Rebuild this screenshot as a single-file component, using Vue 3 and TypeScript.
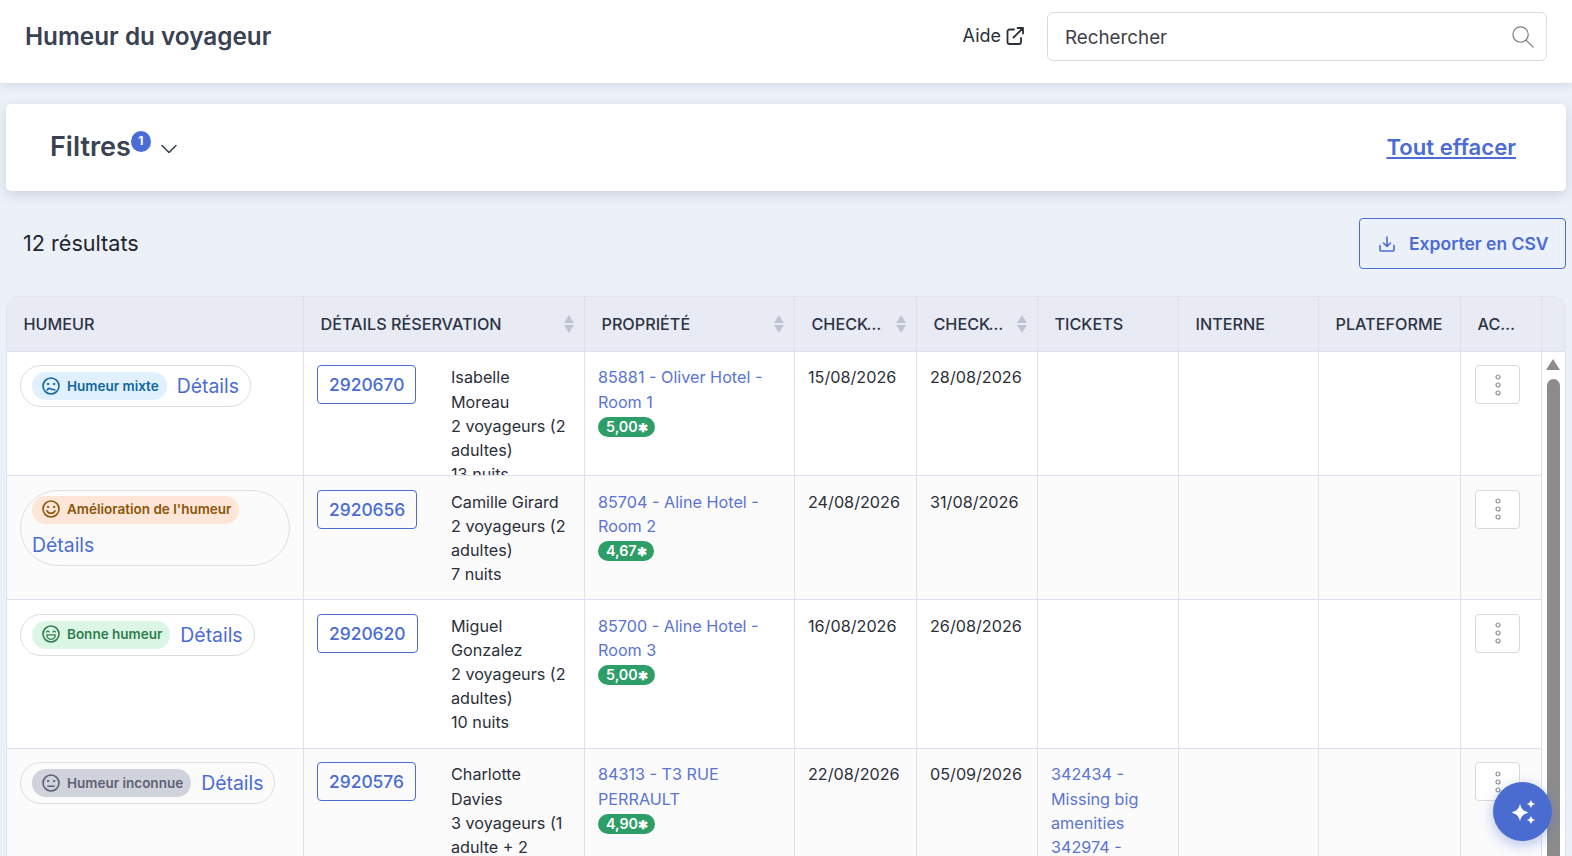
<template>
  <div class="page">
    <header class="topbar">
      <h1 class="title">Humeur du voyageur</h1>
      <div class="topbar-right">
        <a class="help">
          Aide
          <svg class="help-icon" viewBox="0 0 20 20" fill="none" stroke="currentColor" stroke-width="1.8" stroke-linecap="round" stroke-linejoin="round">
            <path d="M9 3.5H4.5a2 2 0 0 0-2 2V16a2 2 0 0 0 2 2H14a2 2 0 0 0 2-2v-4" />
            <path d="M8.5 11.5 18 2M12.5 2H18v5.5" />
          </svg>
        </a>
        <div class="search">
          <input class="search-input" placeholder="Rechercher" />
          <svg class="search-icon" viewBox="0 0 24 24" fill="none" stroke="currentColor" stroke-width="1.3" stroke-linecap="round">
            <circle cx="10" cy="10" r="8" />
            <path d="m16 16 7 7" />
          </svg>
        </div>
      </div>
    </header>

    <main class="content">
      <section class="filters">
        <div class="filters-left">
          <span class="filters-label">Filtres</span>
          <span class="filters-badge">1</span>
          <svg class="chevron" viewBox="0 0 16 10" fill="none" stroke="currentColor" stroke-width="1.6" stroke-linecap="round" stroke-linejoin="round">
            <path d="m1 1.500 7 7 7-7" />
          </svg>
        </div>
        <a class="clear-all">Tout effacer</a>
      </section>

      <div class="results-bar">
        <span class="results-count">12 résultats</span>
        <button class="export-btn">
          <svg class="export-icon" viewBox="0 0 18 18" fill="none" stroke="currentColor" stroke-width="1.6" stroke-linecap="round" stroke-linejoin="round">
            <path d="M9 2v9.5M5.5 8 9 11.5 12.5 8" />
            <path d="M2 10.5V15a1 1 0 0 0 1 1h12a1 1 0 0 0 1-1v-4.5" />
          </svg>
          Exporter en CSV
        </button>
      </div>

      <section class="table">
        <div class="table-head">
          <div v-for="col in columns" :key="col.label" class="th">
            <span class="th-label">{{ col.label }}</span>
            <span v-if="col.sortable" class="sort">
              <i class="sort-up"></i>
              <i class="sort-down"></i>
            </span>
          </div>
          <div class="th th-scroll"></div>
        </div>

        <div class="table-body">
          <div class="rows">
            <div
              v-for="(row, i) in rows"
              :key="row.id"
              class="row"
              :class="{ alt: i % 2 === 1 }"
              :style="{ height: row.height + 'px' }"
            >
              <div class="td">
                <div class="mood-pill">
                  <span class="chip" :class="'chip-' + row.mood">
                    <svg class="face" viewBox="0 0 18 18" fill="none" stroke="currentColor" stroke-width="1.6" stroke-linecap="round" stroke-linejoin="round">
                      <circle cx="9" cy="9" r="8" />
                      <template v-if="row.mood === 'mixed'">
                        <circle cx="6" cy="7" r="0.7" fill="currentColor" stroke-width="1" />
                        <circle cx="12" cy="7" r="0.7" fill="currentColor" stroke-width="1" />
                        <path d="M5.200 13c.8-1.500 2-2 3.200-1.400s1.200 1 2.300 .9 1.500-.3 2.100 .5" />
                      </template>
                      <template v-else-if="row.mood === 'better'">
                        <circle cx="6" cy="7" r="0.7" fill="currentColor" stroke-width="1" />
                        <circle cx="12" cy="7" r="0.7" fill="currentColor" stroke-width="1" />
                        <path d="M5 10.800c.8 1.700 2.200 2.500 4 2.500s3.200-.8 4-2.500" />
                      </template>
                      <template v-else-if="row.mood === 'good'">
                        <path d="M4.600 7c.5-1.100 2-1.100 2.500 0M10.900 7c.5-1.100 2-1.100 2.500 0" stroke-width="1.300" />
                        <path d="M4.800 9.800h8.400c0 2.800-1.800 4.500-4.200 4.500s-4.200-1.700-4.200-4.500Z" stroke-width="1.300" />
                      </template>
                      <template v-else>
                        <circle cx="6" cy="7" r="0.7" fill="currentColor" stroke-width="1" />
                        <circle cx="12" cy="7" r="0.7" fill="currentColor" stroke-width="1" />
                        <path d="M6 12.200h6" />
                      </template>
                    </svg>
                    {{ row.moodLabel }}
                  </span>
                  <a class="mood-link">Détails</a>
                </div>
              </div>

              <div class="td booking">
                <div><button class="booking-id">{{ row.id }}</button></div>
                <div class="booking-text">
                  <div>{{ row.guest }}</div>
                  <div>{{ row.travellers }}</div>
                  <div>{{ row.nights }}</div>
                </div>
              </div>

              <div class="td">
                <a class="link">{{ row.property }}</a>
                <div><span class="score">{{ row.score }}<span class="score-star">✱</span></span></div>
              </div>

              <div class="td">{{ row.checkIn }}</div>
              <div class="td">{{ row.checkOut }}</div>
              <div class="td">
                <a v-for="t in row.tickets" :key="t" class="link ticket">{{ t }}</a>
              </div>
              <div class="td"></div>
              <div class="td"></div>
              <div class="td">
                <button class="action-btn">
                  <svg viewBox="0 0 8 24" width="8" height="24" fill="none" stroke="currentColor" stroke-width="1.200">
                    <circle cx="4" cy="4" r="2" />
                    <circle cx="4" cy="12" r="2" />
                    <circle cx="4" cy="20" r="2" />
                  </svg>
                </button>
              </div>
            </div>
          </div>

          <div class="scrollbar">
            <i class="scroll-arrow"></i>
            <div class="scroll-thumb"></div>
          </div>
        </div>
      </section>
    </main>

    <button class="fab">
      <svg viewBox="0 0 32 32" width="32" height="32" fill="#fff">
        <path d="M13 7.500c.9 5 3 7.300 8.500 9-5.500 1.700-7.600 4-8.500 9-.9-5-3-7.300-8.500-9 5.500-1.700 7.600-4 8.500-9Z" />
        <path d="M24 3.500c.5 2.600 1.600 3.900 4.500 4.500-2.900.6-4 1.900-4.500 4.500-.5-2.600-1.600-3.900-4.500-4.500 2.900-.6 4-1.900 4.500-4.500Z" />
        <path d="M24 19.500c.5 2.600 1.600 3.900 4.500 4.500-2.900.6-4 1.900-4.500 4.500-.5-2.600-1.600-3.900-4.500-4.500 2.900-.6 4-1.900 4.500-4.500Z" />
      </svg>
    </button>
  </div>
</template>

<script setup lang="ts">
interface Column {
  label: string
  sortable?: boolean
}

interface Row {
  id: string
  height: number
  mood: 'mixed' | 'better' | 'good' | 'unknown'
  moodLabel: string
  guest: string
  travellers: string
  nights: string
  property: string
  score: string
  checkIn: string
  checkOut: string
  tickets: string[]
}

const columns: Column[] = [
  { label: 'Humeur' },
  { label: 'Détails réservation', sortable: true },
  { label: 'Propriété', sortable: true },
  { label: 'Check-in', sortable: true },
  { label: 'Check-out', sortable: true },
  { label: 'Tickets' },
  { label: 'Interne' },
  { label: 'Plateforme' },
  { label: 'Actions' }
]

const rows: Row[] = [
  {
    id: '2920670',
    height: 124.2,
    mood: 'mixed',
    moodLabel: 'Humeur mixte',
    guest: 'Isabelle Moreau',
    travellers: '2 voyageurs (2 adultes)',
    nights: '13 nuits',
    property: '85881 - Oliver Hotel - Room 1',
    score: '5,00',
    checkIn: '15/08/2026',
    checkOut: '28/08/2026',
    tickets: []
  },
  {
    id: '2920656',
    height: 124,
    mood: 'better',
    moodLabel: "Amélioration de l'humeur",
    guest: 'Camille Girard',
    travellers: '2 voyageurs (2 adultes)',
    nights: '7 nuits',
    property: '85704 - Aline Hotel - Room 2',
    score: '4,67',
    checkIn: '24/08/2026',
    checkOut: '31/08/2026',
    tickets: []
  },
  {
    id: '2920620',
    height: 148.8,
    mood: 'good',
    moodLabel: 'Bonne humeur',
    guest: 'Miguel Gonzalez',
    travellers: '2 voyageurs (2 adultes)',
    nights: '10 nuits',
    property: '85700 - Aline Hotel - Room 3',
    score: '5,00',
    checkIn: '16/08/2026',
    checkOut: '26/08/2026',
    tickets: []
  },
  {
    id: '2920576',
    height: 220,
    mood: 'unknown',
    moodLabel: 'Humeur inconnue',
    guest: 'Charlotte Davies',
    travellers: '3 voyageurs (1 adulte + 2 enfants)',
    nights: '14 nuits',
    property: '84313 - T3 RUE PERRAULT',
    score: '4,90',
    checkIn: '22/08/2026',
    checkOut: '05/09/2026',
    tickets: ['342434 - Missing big amenities', '342974 - Cleaning issue']
  }
]
</script>

<style>
html,
body {
  margin: 0;
  background: #ecf0f8;
}
</style>

<style scoped>
.page {
  position: relative;
  height: 856px;
  overflow: hidden;
  background: #ecf0f8;
  font-family: Inter, "Liberation Sans", sans-serif;
  font-size: 16.2px;
  line-height: 24.2px;
  color: #2b2f3a;
}

.topbar {
  position: relative;
  z-index: 2;
  display: flex;
  align-items: center;
  justify-content: space-between;
  height: 83px;
  box-sizing: border-box;
  padding: 0 25px 11px;
  background: #fff;
  box-shadow: 0 2px 8px rgba(60, 70, 110, 0.14);
}

.title {
  margin: 0;
  font-size: 24.3px;
  font-weight: 600;
  color: #3a4152;
}

.topbar-right {
  display: flex;
  align-items: center;
  gap: 22px;
}

.help {
  display: flex;
  align-items: center;
  gap: 4px;
  font-size: 18px;
  color: #2b2f3a;
}

.help-icon {
  width: 20px;
  height: 20px;
}

.search {
  position: relative;
  width: 500px;
}

.search-input {
  display: block;
  width: 100%;
  height: 49px;
  box-sizing: border-box;
  padding: 2px 50px 0 17px;
  border: 1px solid #dcdcdc;
  border-radius: 6px;
  outline: none;
  font-family: inherit;
  font-size: 18.8px;
  color: #2b2f3a;
}

.search-input::placeholder {
  color: #3f4148;
  opacity: 1;
}

.search-icon {
  position: absolute;
  top: 13px;
  right: 13px;
  width: 23px;
  height: 23px;
  color: #808080;
}

.content {
  padding: 21px 6px 0;
}

.filters {
  display: flex;
  align-items: center;
  justify-content: space-between;
  height: 87px;
  padding: 0 50px 0 44px;
  background: #fff;
  border-radius: 5px;
  box-shadow: 0 4px 12px rgba(60, 70, 110, 0.16);
}

.filters-left {
  display: flex;
  align-items: center;
  margin-top: -2px;
  color: #3a4152;
}

.filters-label {
  font-size: 27px;
  line-height: 36px;
  font-weight: 600;
}

.filters-badge {
  display: flex;
  align-items: center;
  justify-content: center;
  align-self: flex-start;
  width: 20px;
  height: 21px;
  margin-top: 2px;
  border-radius: 50%;
  background: #4a6cd4;
  color: #fff;
  font-size: 12px;
  line-height: 1;
  font-weight: 700;
}

.chevron {
  width: 16px;
  height: 10px;
  margin: 4px 0 0 10px;
}

.clear-all {
  font-size: 22.1px;
  font-weight: 600;
  color: #4a6cd4;
  text-decoration: underline;
}

.results-bar {
  display: flex;
  align-items: center;
  justify-content: space-between;
  height: 105px;
  padding-left: 17px;
  box-sizing: border-box;
}

.results-count {
  font-size: 21.6px;
  color: #22252d;
}

.export-btn {
  display: flex;
  align-items: center;
  gap: 13px;
  width: 207px;
  height: 51px;
  box-sizing: border-box;
  padding: 0 0 0 18px;
  background: transparent;
  border: 1px solid #4a6cd4;
  border-radius: 4px;
  font-family: inherit;
  font-size: 17.5px;
  font-weight: 600;
  color: #4a6cd4;
}

.export-icon {
  width: 18px;
  height: 18px;
}

.table {
  border: 1px solid #dfe3ee;
  border-radius: 12px 12px 0 0;
  overflow: hidden;
  background: #fff;
}

.table-head,
.row {
  display: grid;
  grid-template-columns: 297px 281px 210px 122px 121px 141px 140px 142px 81px;
}

.table-head {
  grid-template-columns: 297px 281px 210px 122px 121px 141px 140px 142px 81px 1fr;
  height: 54px;
  background: #e8ebf3;
  border-bottom: 1px solid #dde1ee;
}

.th {
  display: flex;
  align-items: center;
  justify-content: space-between;
  gap: 10px;
  min-width: 0;
  padding: 0 10px 0 16.5px;
  border-right: 1px solid #dde1ee;
  font-weight: 500;
  text-transform: uppercase;
  color: #2d3345;
}

.th:nth-child(9) {
  padding-right: 22px;
}

.th-scroll {
  border-right: 0;
  padding: 0;
}

.th-label {
  flex: 1;
  min-width: 0;
  overflow: hidden;
  white-space: nowrap;
  text-overflow: ellipsis;
}

.sort {
  display: flex;
  flex: none;
  flex-direction: column;
  gap: 2px;
}

.sort-up,
.sort-down {
  width: 0;
  height: 0;
  border-left: 5.5px solid transparent;
  border-right: 5.5px solid transparent;
}

.sort-up {
  border-bottom: 8px solid #bfc3d1;
}

.sort-down {
  border-top: 8px solid #bfc3d1;
}

.table-body {
  display: flex;
}

.rows {
  flex: none;
  width: 1535px;
}

.row {
  overflow: hidden;
  box-sizing: border-box;
  border-bottom: 1px solid #dde1ee;
  background: #fff;
}

.row.alt {
  background: #fbfbfc;
}

.td {
  min-width: 0;
  overflow: hidden;
  box-sizing: border-box;
  padding: 13.35px 13px 13px;
  border-right: 1px solid #dde1ee;
}

.mood-pill {
  display: inline-flex;
  flex-wrap: wrap;
  align-items: center;
  gap: 6px 10px;
  padding: 5px 11px;
  border: 1px solid #dedede;
  border-radius: 38px;
}

.chip {
  display: inline-flex;
  align-items: center;
  gap: 7px;
  height: 28px;
  box-sizing: border-box;
  padding: 0 8px 1px 10px;
  border-radius: 14px;
  font-size: 13.5px;
  font-weight: 600;
  white-space: nowrap;
}

.face {
  width: 18px;
  height: 18px;
  flex: none;
}

.chip-mixed {
  background: #e0f0ff;
  color: #0f659f;
}

.chip-better {
  background: #fde5d8;
  color: #8a5608;
}

.chip-good {
  background: #dcf6e6;
  color: #2f7d4f;
}

.chip-unknown {
  background: #d0d2dc;
  color: #5c6075;
}

.mood-link {
  font-size: 19.4px;
  line-height: 30px;
  color: #4a6cd4;
}

.booking {
  display: grid;
  grid-template-columns: 134px 120px;
  align-items: start;
}

.booking-id {
  display: block;
  height: 39px;
  padding: 0 11px;
  background: transparent;
  border: 1px solid #4a6cd4;
  border-radius: 4px;
  font-family: inherit;
  font-size: 17.4px;
  font-weight: 500;
  color: #4a6cd4;
}

.link {
  color: #5b74d0;
}

.ticket {
  display: block;
}

.score {
  display: inline-block;
  height: 20px;
  margin-top: 3.5px;
  padding: 0 7px 0 8px;
  border-radius: 10px;
  background: #2e9e68;
  color: #fff;
  font-size: 14.3px;
  line-height: 20px;
  font-weight: 600;
  vertical-align: top;
}

.score-star {
  font-size: 12px;
  vertical-align: 0;
}

.action-btn {
  display: flex;
  align-items: center;
  justify-content: center;
  width: 45px;
  height: 39px;
  margin-left: 1px;
  padding: 0;
  background: #fff;
  border: 1px solid #d9d9d9;
  border-radius: 4px;
  color: #8b8d99;
}

.scrollbar {
  display: flex;
  flex-direction: column;
  align-items: center;
  flex: none;
  width: 23px;
  padding: 7px 1px 0 0;
  box-sizing: border-box;
}

.scroll-arrow {
  width: 0;
  height: 0;
  border-left: 7px solid transparent;
  border-right: 7px solid transparent;
  border-bottom: 11px solid #8c8c8c;
}

.scroll-thumb {
  width: 13px;
  height: 600px;
  margin-top: 9px;
  border-radius: 7px 7px 0 0;
  background: #8c8c8c;
}

.fab {
  position: absolute;
  left: 1493px;
  top: 782px;
  z-index: 3;
  display: flex;
  align-items: center;
  justify-content: center;
  width: 59px;
  height: 59px;
  padding: 0;
  border: 0;
  border-radius: 50%;
  background: #4a6bcf;
  box-shadow: 0 4px 14px rgba(74, 107, 207, 0.4);
}
</style>
